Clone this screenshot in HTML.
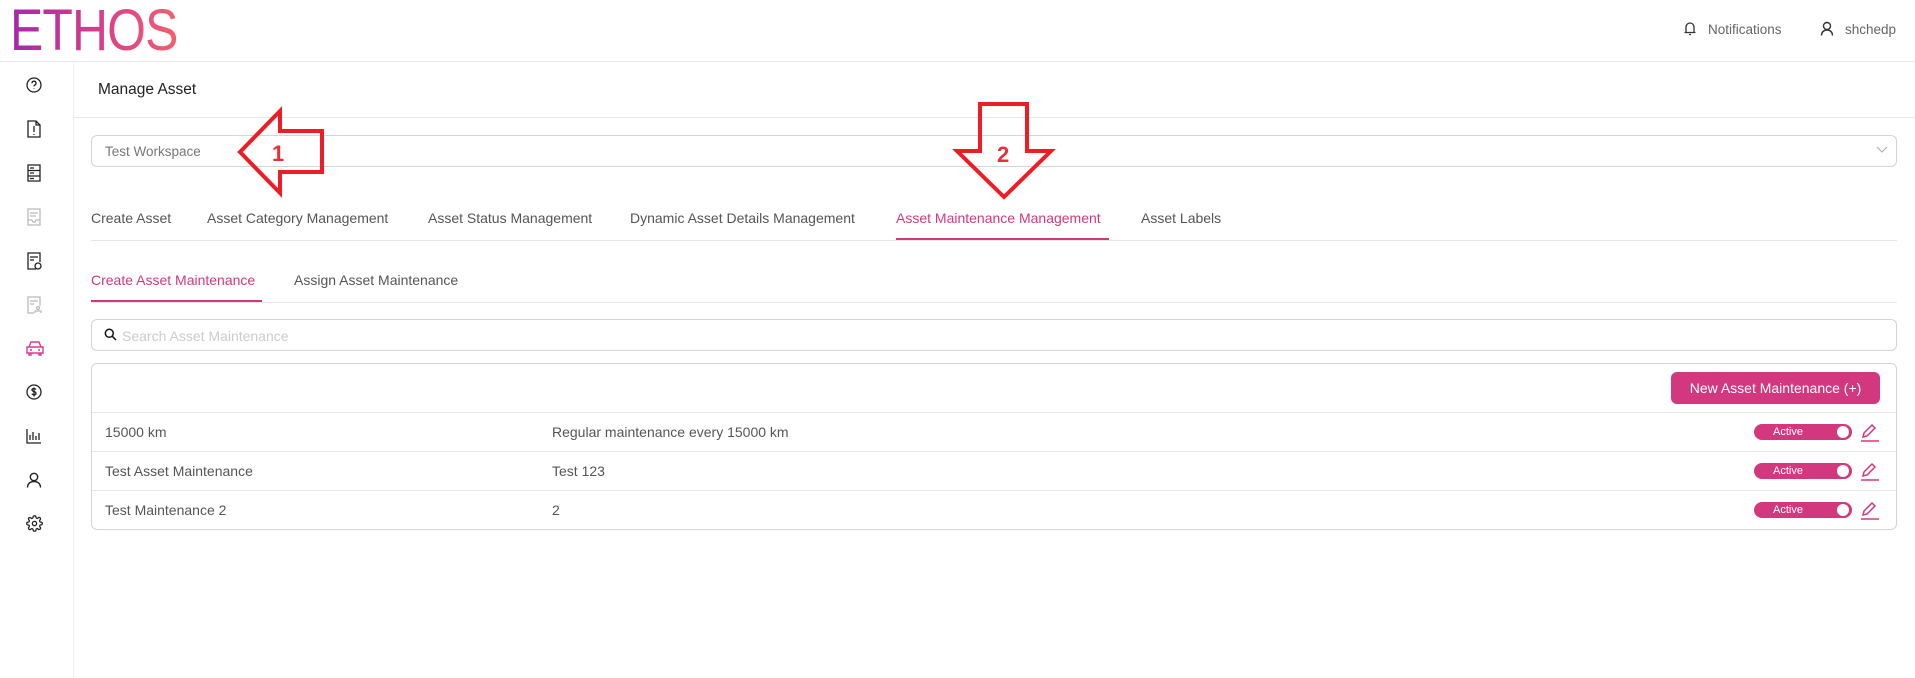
<!DOCTYPE html>
<html><head><meta charset="utf-8"><style>
*{box-sizing:border-box;margin:0;padding:0}
body{width:1915px;height:678px;background:#fff;font-family:"Liberation Sans",sans-serif;color:#555;position:relative;overflow:hidden;font-size:14px}
.a{position:absolute;white-space:nowrap}
.hl{position:absolute;height:1px;background:#e6e6e6}
.logo{left:10px;top:0px;font-size:58px;font-weight:normal;letter-spacing:-1px;background:linear-gradient(90deg,#a22aa8,#d63c8c,#f2606e);-webkit-background-clip:text;background-clip:text;color:transparent;line-height:62px;transform:scaleX(0.86);transform-origin:0 0}
.box{position:absolute;border:1px solid #d4d4d4;border-radius:6px}
.tab{position:absolute;top:210px;font-size:14px;color:#555}
.row{position:absolute;left:105px;font-size:14px}
.tg{position:absolute;left:1754px;width:98px;height:16px;border-radius:8px;background:#d3387f;color:#fff;font-size:11px;padding-left:19px;line-height:17px}
.tg:after{content:"";position:absolute;right:3px;top:2px;width:12px;height:12px;border-radius:50%;background:#fff}
.pen{position:absolute;left:1860px}
.ic{position:absolute;left:26px}
</style></head><body>
<div class="a logo">ETHOS</div>
<svg class="a" style="left:1683px;top:21px" width="14" height="15" viewBox="0 0 14 15" fill="none" stroke="#333" stroke-width="1.3"><path d="M3 11V6a4 4 0 0 1 8 0v5M1.5 11.5h11M6 13.5h2"/></svg>
<div class="a" style="left:1708px;top:22px;font-size:13.5px;color:#666">Notifications</div>
<svg class="a" style="left:1820px;top:21px" width="14" height="15" viewBox="0 0 14 15" fill="none" stroke="#333" stroke-width="1.4"><circle cx="7" cy="5" r="3.5"/><path d="M1.5 14.5c0-3.5 2.5-5.5 5.5-5.5s5.5 2 5.5 5.5"/></svg>
<div class="a" style="left:1845px;top:22px;font-size:13.5px;color:#666">shchedp</div>
<div class="hl" style="left:0;top:61px;width:1915px"></div>
<div style="position:absolute;left:73px;top:61px;width:1px;height:617px;background:#eee"></div>
<svg class="ic" style="top:77px" width="16" height="16" viewBox="0 0 16 16" fill="none" stroke="#222" stroke-width="1.3"><circle cx="8" cy="8" r="7"/><path d="M6 6.2a2 2 0 1 1 2.6 1.9c-.5.2-.6.6-.6 1.3M8 11.5v.5"/></svg>
<svg class="ic" style="top:120px" width="16" height="18" viewBox="0 0 16 18" fill="none" stroke="#222" stroke-width="1.3"><path d="M2 1h8l4 4v12H2zM10 1v4h4M8 6v6M8 14v1"/></svg>
<svg class="ic" style="top:164px" width="16" height="18" viewBox="0 0 16 18" fill="none" stroke="#222" stroke-width="1.3"><path d="M2 1h12v16H2zM2 6.5h12M2 12h12M4 4h4M4 9h4M4 14.5h4"/></svg>
<svg class="ic" style="top:208px" width="16" height="18" viewBox="0 0 16 18" fill="none" stroke="#bbb" stroke-width="1.3"><path d="M2 1h12v16H2zM4 5h8M4 8h6M2 12h4l1 2h2l1-2h4"/></svg>
<svg class="ic" style="top:252px" width="16" height="18" viewBox="0 0 16 18" fill="none" stroke="#222" stroke-width="1.3"><path d="M10 17H2V1h12v9M4 5h8M4 8h4"/><circle cx="12" cy="14" r="3"/></svg>
<svg class="ic" style="top:296px" width="16" height="18" viewBox="0 0 16 18" fill="none" stroke="#bbb" stroke-width="1.3"><path d="M8 17H2V1h12v9M4 5h8M4 8h4M9 17v-2h6v2"/><circle cx="12" cy="12" r="1.5"/></svg>
<svg class="ic" style="top:341px" width="18" height="15" viewBox="0 0 18 15" fill="none" stroke="#d63c8c" stroke-width="1.4"><path d="M3 6l2-5h8l2 5M1 6h16v6H1zM3 12v2h2v-2M13 12v2h2v-2M4 9h2M12 9h2"/></svg>
<svg class="ic" style="top:384px" width="16" height="16" viewBox="0 0 16 16" fill="none" stroke="#222" stroke-width="1.3"><circle cx="8" cy="8" r="7"/><path d="M10 5.5c-.5-.7-1.2-1-2-1-1.2 0-2 .6-2 1.5 0 2 4 1 4 3.2 0 1-.9 1.6-2 1.6-.9 0-1.600-.3-2.1-1M8 3.5v9"/></svg>
<svg class="ic" style="top:428px" width="16" height="16" viewBox="0 0 16 16" fill="none" stroke="#222" stroke-width="1.3"><path d="M1 1v14h14M4 12V7M7 12V4M10 12V8M13 12V5"/></svg>
<svg class="ic" style="top:472px" width="16" height="16" viewBox="0 0 16 16" fill="none" stroke="#222" stroke-width="1.4"><circle cx="8" cy="5" r="3.7"/><path d="M1.5 15.5c0-3.8 2.8-6 6.5-6s6.5 2.2 6.5 6"/></svg>
<svg class="ic" style="top:515px" width="17" height="17" viewBox="0 0 24 24" fill="none" stroke="#222" stroke-width="1.8"><circle cx="12" cy="12" r="3"/><path d="M19.4 15a1.7 1.7 0 0 0 .3 1.8l.1.1a2 2 0 1 1-2.8 2.8l-.1-.1a1.7 1.7 0 0 0-1.8-.3 1.7 1.7 0 0 0-1 1.5V21a2 2 0 1 1-4 0v-.1a1.7 1.7 0 0 0-1.1-1.5 1.7 1.7 0 0 0-1.8.3l-.1.1a2 2 0 1 1-2.8-2.8l.1-.1a1.7 1.7 0 0 0 .3-1.8 1.7 1.7 0 0 0-1.5-1H3a2 2 0 1 1 0-4h.1a1.7 1.7 0 0 0 1.5-1.1 1.7 1.7 0 0 0-.3-1.8l-.1-.1a2 2 0 1 1 2.8-2.8l.1.1a1.7 1.7 0 0 0 1.8.3H9a1.7 1.7 0 0 0 1-1.5V3a2 2 0 1 1 4 0v.1a1.7 1.7 0 0 0 1 1.5 1.7 1.7 0 0 0 1.8-.3l.1-.1a2 2 0 1 1 2.8 2.8l-.1.1a1.7 1.7 0 0 0-.3 1.8V9a1.7 1.7 0 0 0 1.5 1H21a2 2 0 1 1 0 4h-.1a1.7 1.7 0 0 0-1.5 1z"/></svg>
<div class="a" style="left:98px;top:81px;font-size:15.5px;color:#222">Manage Asset</div>
<div class="hl" style="left:74px;top:117px;width:1841px"></div>
<div class="box" style="left:91px;top:135px;width:1806px;height:32px"></div>
<div class="a" style="left:105px;top:144px;font-size:13.5px;color:#777">Test Workspace</div>
<svg class="a" style="left:1876px;top:146px" width="12" height="8" viewBox="0 0 12 8" fill="none" stroke="#aaa" stroke-width="1"><path d="M1 1l5 5 5-5"/></svg>
<div class="tab" style="left:91px">Create Asset</div>
<div class="tab" style="left:207px">Asset Category Management</div>
<div class="tab" style="left:428px">Asset Status Management</div>
<div class="tab" style="left:630px">Dynamic Asset Details Management</div>
<div class="tab" style="left:896px;color:#d3387f">Asset Maintenance Management</div>
<div class="tab" style="left:1141px">Asset Labels</div>
<div class="hl" style="left:91px;top:240px;width:1806px"></div>
<div style="position:absolute;left:896px;top:238px;width:213px;height:2px;background:#d3387f"></div>
<div class="a" style="left:91px;top:272px;color:#d3387f">Create Asset Maintenance</div>
<div class="a" style="left:294px;top:272px">Assign Asset Maintenance</div>
<div class="hl" style="left:91px;top:302px;width:1806px"></div>
<div style="position:absolute;left:91px;top:300px;width:171px;height:2px;background:#d3387f"></div>
<div class="box" style="left:91px;top:319px;width:1806px;height:32px"></div>
<svg class="a" style="left:104px;top:328px" width="13" height="13" viewBox="0 0 13 13" fill="none" stroke="#111" stroke-width="1.5"><circle cx="5.3" cy="5.3" r="4"/><path d="M8.3 8.3l3.7 3.7"/></svg>
<div class="a" style="left:122px;top:328px;color:#ccc">Search Asset Maintenance</div>
<div class="box" style="left:91px;top:363px;width:1806px;height:167px"></div>
<div style="position:absolute;left:1671px;top:372px;width:209px;height:32px;border-radius:6px;background:#d3387f;color:#fff;font-size:14px;text-align:center;line-height:32px">New Asset Maintenance (+)</div>
<div class="hl" style="left:92px;top:412px;width:1804px"></div>
<div class="hl" style="left:92px;top:451px;width:1804px"></div>
<div class="hl" style="left:92px;top:490px;width:1804px"></div>
<div class="row" style="top:424px">15000 km</div><div class="row" style="left:552px;top:424px">Regular maintenance every 15000 km</div>
<div class="row" style="top:463px">Test Asset Maintenance</div><div class="row" style="left:552px;top:463px">Test 123</div>
<div class="row" style="top:502px">Test Maintenance 2</div><div class="row" style="left:552px;top:502px">2</div>
<div class="tg" style="top:424px">Active</div>
<div class="tg" style="top:463px">Active</div>
<div class="tg" style="top:502px">Active</div>
<svg class="pen" style="top:424px" width="20" height="18" viewBox="0 0 20 18" fill="none" stroke="#d3387f" stroke-width="1.5"><path d="M3 13l1-4 8-8 3 3-8 8zM1 17h18"/></svg>
<svg class="pen" style="top:463px" width="20" height="18" viewBox="0 0 20 18" fill="none" stroke="#d3387f" stroke-width="1.5"><path d="M3 13l1-4 8-8 3 3-8 8zM1 17h18"/></svg>
<svg class="pen" style="top:502px" width="20" height="18" viewBox="0 0 20 18" fill="none" stroke="#d3387f" stroke-width="1.5"><path d="M3 13l1-4 8-8 3 3-8 8zM1 17h18"/></svg>
<svg class="a" style="left:0;top:0" width="1915" height="678" viewBox="0 0 1915 678" fill="none" stroke="#ee1c24" stroke-width="4">
<path d="M240 152L280 111V131H322V172H280V193Z"/>
<path d="M1004 197L957 151H980V104H1027V151H1051Z"/>
<text x="272" y="161" fill="#e8303a" stroke="none" font-family="Liberation Sans" font-weight="bold" font-size="22">1</text>
<text x="997" y="162" fill="#e8303a" stroke="none" font-family="Liberation Sans" font-weight="bold" font-size="22">2</text>
</svg>
</body></html>
